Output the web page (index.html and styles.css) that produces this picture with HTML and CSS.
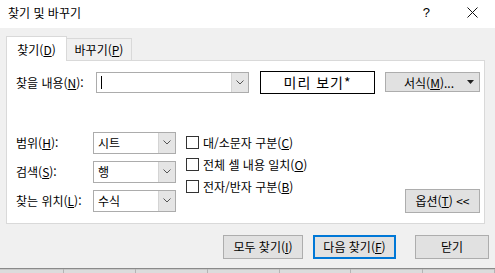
FILE: index.html
```html
<!DOCTYPE html>
<html lang="ko">
<head>
    <meta charset="UTF-8">
    <title>찾기 및 바꾸기</title>
    <link rel="stylesheet" href="styles.css">
</head>
<body>
    <div class="window">
        <div class="titlebar">
            <span class="title">찾기 및 바꾸기</span>
            <div class="controls">
                <span class="help">?</span>
                <svg class="close" width="11" height="11" viewBox="0 0 11 11">
                    <path d="M0.5 0.5 L10.5 10.5 M10.5 0.5 L0.5 10.5" stroke="#111" stroke-width="1" fill="none"/>
                </svg>
            </div>
        </div>

        <div class="body">
            <div class="tabs">
                <div class="tab active">찾기(<u>D</u>)</div>
                <div class="tab">바꾸기(<u>P</u>)</div>
            </div>

            <div class="panel">
                <div class="find-row">
                    <label class="find-label">찾을 내용(<u>N</u>):</label>
                    <div class="combo find-combo">
                        <span class="value"><span class="caret"></span></span>
                        <span class="drop">
                            <svg width="8" height="5" viewBox="0 0 8 5"><path d="M0.5 0.5 L4 4 L7.5 0.5" stroke="#555" fill="none"/></svg>
                        </span>
                    </div>
                    <div class="preview">미리 보기*</div>
                    <div class="btn format-btn">
                        <span>서식(<u>M</u>)...</span>
                        <svg width="7" height="4" viewBox="0 0 7 4"><path d="M0 0 H7 L3.5 4 Z" fill="#222"/></svg>
                    </div>
                </div>

                <div class="options">
                    <div class="fields">
                        <label>범위(<u>H</u>):</label>
                        <div class="combo">
                            <span class="value">시트</span>
                            <span class="drop"><svg width="8" height="5" viewBox="0 0 8 5"><path d="M0.5 0.5 L4 4 L7.5 0.5" stroke="#555" fill="none"/></svg></span>
                        </div>
                        <label>검색(<u>S</u>):</label>
                        <div class="combo">
                            <span class="value">행</span>
                            <span class="drop"><svg width="8" height="5" viewBox="0 0 8 5"><path d="M0.5 0.5 L4 4 L7.5 0.5" stroke="#555" fill="none"/></svg></span>
                        </div>
                        <label>찾는 위치(<u>L</u>):</label>
                        <div class="combo">
                            <span class="value">수식</span>
                            <span class="drop"><svg width="8" height="5" viewBox="0 0 8 5"><path d="M0.5 0.5 L4 4 L7.5 0.5" stroke="#555" fill="none"/></svg></span>
                        </div>
                    </div>

                    <div class="checks">
                        <div class="check"><span class="box"></span>대/소문자 구분(<u>C</u>)</div>
                        <div class="check"><span class="box"></span>전체 셀 내용 일치(<u>O</u>)</div>
                        <div class="check"><span class="box"></span>전자/반자 구분(<u>B</u>)</div>
                    </div>

                    <div class="btn options-btn">옵션(<u>T</u>) &lt;&lt;</div>
                </div>
            </div>

            <div class="actions">
                <div class="btn find-all">모두 찾기(<u>I</u>)</div>
                <div class="btn find-next default">다음 찾기(<u>F</u>)</div>
                <div class="btn close-btn">닫기</div>
            </div>
        </div>

        <div class="sheet">
            <div class="cell first"></div>
            <div class="cell"></div>
            <div class="cell"></div>
            <div class="cell"></div>
            <div class="cell"></div>
            <div class="cell"></div>
            <div class="cell"></div>
        </div>
    </div>
</body>
</html>
```

FILE: styles.css
```css
body {
    margin: 0;
    font-family: "Noto Sans CJK KR", "Noto Sans", sans-serif;
    font-size: 12px;
    color: #000;
    background-color: #f0f0f0;
    overflow: hidden;
}

u {
    text-decoration-thickness: 1px;
    text-underline-offset: 1px;
}

.window {
    width: 495px;
    height: 273px;
    display: flex;
    flex-direction: column;
}

.titlebar {
    height: 28px;
    background-color: #fff;
    display: flex;
    align-items: center;
    justify-content: space-between;
    padding: 0 0 0 8px;
    box-sizing: border-box;
}

.title {
    line-height: 1;
    margin-top: -2px;
}

.controls {
    display: flex;
    align-items: center;
    margin-top: -3px;
}

.help {
    font-family: "Liberation Sans", sans-serif;
    font-size: 13px;
    line-height: 1;
    margin-right: 37px;
}

.close {
    margin-right: 17px;
}

.body {
    height: 241px;
    padding: 8px 6px 0 6px;
    box-sizing: border-box;
    display: flex;
    flex-direction: column;
}

.tabs {
    display: flex;
    align-items: flex-start;
}

.tab {
    height: 22px;
    margin-top: 2px;
    width: 65px;
    border: 1px solid #d9d9d9;
    border-left: none;
    border-bottom: none;
    box-sizing: border-box;
    display: flex;
    align-items: center;
    justify-content: center;
    padding-top: 1px;
}

.tab.active {
    width: 61px;
    height: 25px;
    margin-top: 0;
    margin-bottom: -1px;
    border-left: 1px solid #d9d9d9;
    background-color: #fff;
    position: relative;
    z-index: 1;
}

.panel {
    width: 479px;
    height: 164px;
    background-color: #fff;
    border: 1px solid #d9d9d9;
    box-sizing: border-box;
    padding: 10px 4px 0 9px;
}

.find-row {
    display: flex;
    align-items: center;
    height: 23px;
}

.find-label {
    width: 80px;
}

.combo {
    height: 22px;
    border: 1px solid #acacac;
    box-sizing: border-box;
    display: flex;
    background-color: #fff;
}

.combo .value {
    flex: 1;
    display: flex;
    align-items: center;
    padding-left: 4px;
}

.combo .drop {
    width: 16px;
    background-color: #e5e5e5;
    border-left: 1px solid #d4d4d4;
    display: flex;
    align-items: center;
    justify-content: center;
}

.find-combo {
    width: 153px;
    height: 21px;
}

.caret {
    width: 1px;
    height: 13px;
    background-color: #000;
}

.preview {
    width: 115px;
    height: 23px;
    margin-left: 11px;
    border: 1px solid #000;
    box-sizing: border-box;
    display: flex;
    align-items: center;
    justify-content: center;
    font-size: 14px;
    letter-spacing: 1px;
}

.btn {
    background-color: #e1e1e1;
    border: 1px solid #adadad;
    box-sizing: border-box;
    display: flex;
    align-items: center;
    justify-content: center;
}

.format-btn {
    width: 95px;
    height: 20px;
    margin-left: 10px;
    justify-content: flex-end;
    padding-right: 5px;
}

.format-btn span {
    margin-right: 13px;
}

.options {
    display: flex;
    margin-top: 38px;
    height: 82px;
}

.fields {
    display: grid;
    grid-template-columns: 77px 83px;
    grid-auto-rows: 22px;
    row-gap: 7px;
    align-items: center;
}

.checks {
    margin-left: 10px;
    display: flex;
    flex-direction: column;
}

.check {
    height: 22px;
    display: flex;
    align-items: center;
}

.box {
    width: 13px;
    height: 13px;
    border: 1px solid #333;
    box-sizing: border-box;
    margin-right: 4px;
}

.options-btn {
    width: 75px;
    height: 24px;
    margin-left: auto;
    align-self: flex-end;
    margin-bottom: 1px;
}

.actions {
    display: flex;
    justify-content: flex-end;
    margin-top: 11px;
}

.actions .btn {
    height: 24px;
}

.find-all {
    width: 80px;
}

.find-next {
    width: 83px;
    margin-left: 10px;
}

.btn.default {
    border: 2px solid #0078d7;
}

.close-btn {
    width: 74px;
    margin-left: 19px;
}

.sheet {
    height: 4px;
    display: flex;
    border-top: 1px solid #8a8a8a;
    background-color: #dcdcdc;
    box-shadow: inset 0 1px 0 #c8c8c8;
}

.cell {
    width: 72px;
    border-right: 1px solid #b4b4b4;
}

.cell.first {
    width: 64px;
}
```
